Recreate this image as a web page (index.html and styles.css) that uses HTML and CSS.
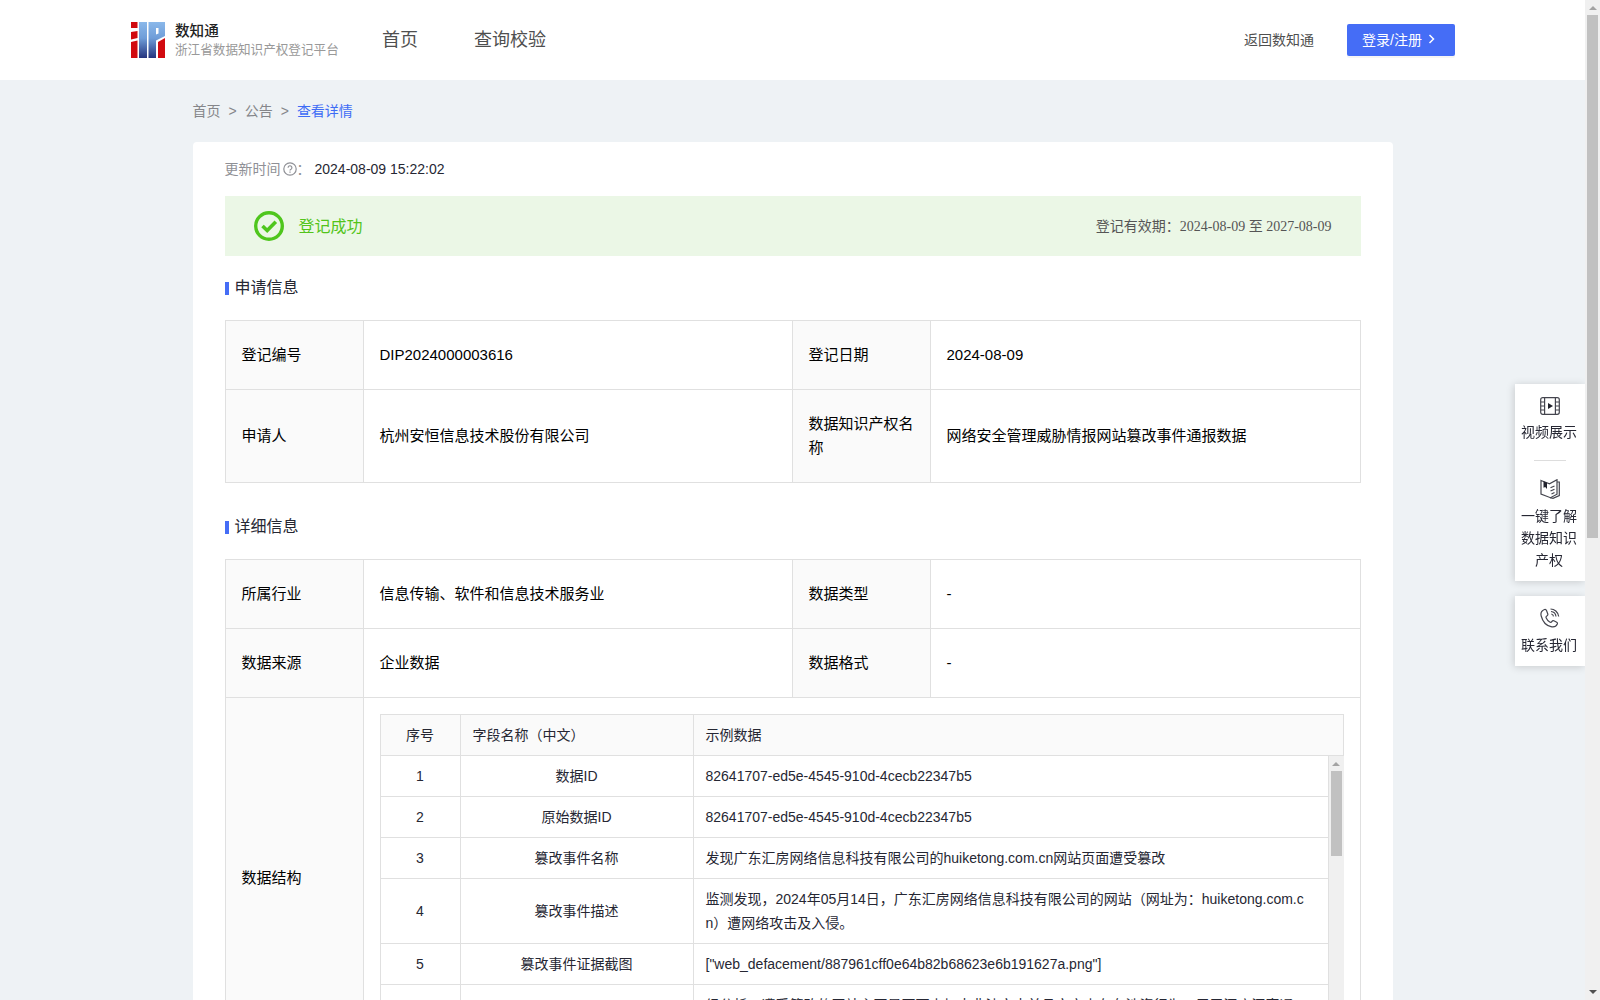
FILE: index.html
```html
<!DOCTYPE html>
<html lang="zh-CN">
<head>
    <meta charset="UTF-8">
    <meta name="viewport" content="width=device-width, initial-scale=1.0">
    <title>浙江省数据知识产权登记平台</title>
    <link rel="stylesheet" href="styles.css">
</head>
<body>
    <div class="window">
        <div class="page">
            <header class="header">
                <div class="logo">
                    <svg width="34" height="36" viewBox="0 0 34 36">
                        <defs>
                            <linearGradient id="blue" x1="0" y1="0" x2="0" y2="1">
                                <stop offset="0" stop-color="#8ab8ea"/>
                                <stop offset="0.45" stop-color="#6f9dd8"/>
                                <stop offset="1" stop-color="#25347e"/>
                            </linearGradient>
                        </defs>
                        <path d="M0 0h6.500v6H0zM0 10l6.500-1v7L0 17.500zM0 20l6.500-1.500V36H0z" fill="#d10a10"/>
                        <path d="M8 0h8v36H8z" fill="url(#blue)"/>
                        <path d="M17.500 0H34v14l-9 4.500V36h-7.500zM25 6v6.500l2.500-1V6z" fill="url(#blue)" fill-rule="evenodd"/>
                        <path d="M27 20l7-4v20h-7z" fill="#d10a10"/>
                    </svg>
                    <div class="logo-text">
                        <div class="logo-name">数知通</div>
                        <div class="logo-sub">浙江省数据知识产权登记平台</div>
                    </div>
                </div>
                <nav class="nav">
                    <a>首页</a>
                    <a>查询校验</a>
                </nav>
                <a class="back">返回数知通</a>
                <button class="login-btn">登录/注册
                    <svg width="8" height="10" viewBox="0 0 8 10"><path d="M1.500 1l4 4-4 4" fill="none" stroke="#fff" stroke-width="1.500"/></svg>
                </button>
            </header>

            <main class="container">
                <div class="breadcrumb">
                    <span>首页</span><i>&gt;</i><span>公告</span><i>&gt;</i><span class="current">查看详情</span>
                </div>

                <div class="card">
                    <div class="update">
                        <span>更新时间</span>
                        <svg width="14" height="14" viewBox="0 0 14 14" fill="none" stroke="#8f9096" stroke-width="1.200"><circle cx="7" cy="7" r="6.200"/><path d="M5.100 5.700a1.900 1.900 0 1 1 2.900 1.600c-.7.400-1 .7-1 1.300M7 9.600v1.200"/></svg>
                        <span class="colon">：</span>
                        <span class="time">2024-08-09 15:22:02</span>
                    </div>

                    <div class="banner">
                        <svg width="30" height="30" viewBox="0 0 30 30" fill="none" stroke="#4fc61d"><circle cx="15" cy="15" r="13.300" stroke-width="3.400"/><path d="M8.500 15l4.700 4.500 8.600-8.700" stroke-width="3.600"/></svg>
                        <span class="banner-status">登记成功</span>
                        <span class="banner-date">登记有效期：2024-08-09 至 2027-08-09</span>
                    </div>

                    <h2>申请信息</h2>
                    <table class="info">
                        <colgroup><col class="label-col"><col class="value-col"><col class="label-col"><col></colgroup>
                        <tr><th>登记编号</th><td>DIP2024000003616</td><th>登记日期</th><td>2024-08-09</td></tr>
                        <tr class="tall"><th>申请人</th><td>杭州安恒信息技术股份有限公司</td><th>数据知识产权名称</th><td>网络安全管理威胁情报网站篡改事件通报数据</td></tr>
                    </table>

                    <h2 class="second">详细信息</h2>
                    <table class="info">
                        <colgroup><col class="label-col"><col class="value-col"><col class="label-col"><col></colgroup>
                        <tr><th>所属行业</th><td>信息传输、软件和信息技术服务业</td><th>数据类型</th><td>-</td></tr>
                        <tr><th>数据来源</th><td>企业数据</td><th>数据格式</th><td>-</td></tr>
                        <tr class="structure">
                            <th>数据结构</th>
                            <td colspan="3">
                                <table class="fields fields-head">
                                    <colgroup><col class="no-col"><col class="name-col"><col></colgroup>
                                    <tr><th class="center">序号</th><th>字段名称（中文）</th><th>示例数据</th></tr>
                                </table>
                                <div class="fields-body">
                                    <table class="fields">
                                        <colgroup><col class="no-col"><col class="name-col"><col></colgroup>
                                        <tr><td>1</td><td>数据ID</td><td>82641707-ed5e-4545-910d-4cecb22347b5</td></tr>
                                        <tr><td>2</td><td>原始数据ID</td><td>82641707-ed5e-4545-910d-4cecb22347b5</td></tr>
                                        <tr><td>3</td><td>篡改事件名称</td><td>发现广东汇房网络信息科技有限公司的huiketong.com.cn网站页面遭受篡改</td></tr>
                                        <tr><td>4</td><td>篡改事件描述</td><td>监测发现，2024年05月14日，广东汇房网络信息科技有限公司的网站（网址为：huiketong.com.cn）遭网络攻击及入侵。</td></tr>
                                        <tr><td>5</td><td>篡改事件证据截图</td><td>["web_defacement/887961cff0e64b82b68623e6b191627a.png"]</td></tr>
                                        <tr class="long"><td></td><td></td><td>经分析，遭受篡改的网站主要是页面中加大非法文本并且文字中存在涉资行为，用于深度深直通，若</td></tr>
                                    </table>
                                    <div class="scrollbar">
                                        <div class="arrow-up"></div>
                                        <div class="thumb"></div>
                                    </div>
                                </div>
                            </td>
                        </tr>
                    </table>
                </div>
            </main>
        </div>

        <div class="scrollbar page-scrollbar">
            <div class="arrow-up"></div>
            <div class="thumb"></div>
            <div class="arrow-down"></div>
        </div>
    </div>

    <aside class="side">
        <div class="side-box">
            <div class="side-item">
                <svg width="20" height="18" viewBox="0 0 20 18" fill="none" stroke="#44454e" stroke-width="1.200"><rect x=".7" y=".7" width="18.600" height="16.600" rx="2"/><path d="M4.600 1v16M15.400 1v16M1 5h3.600M1 9h3.600M1 13h3.600M15.400 5H19M15.400 9H19M15.400 13H19"/><path d="M8 6l5 3-5 3z" fill="#22232d" stroke="none"/></svg>
                <span>视频展示</span>
            </div>
            <div class="side-line"></div>
            <div class="side-item">
                <svg width="20" height="20" viewBox="0 0 20 20" fill="none" stroke="#44454e" stroke-width="1.200"><path d="M1 1.500l8.500 3.300L17 .7v14.500l-6.500 3.500L1 15z"/><path d="M17 3h2.300v13.500L13 19.300l-3-.6M10.500 8.800l4-1.800M10.500 12l4-1.800M11.500 15l3-1.500"/><path d="M3.500 2.300l3.500 1.400V10L5.200 8 3.500 8.700z" fill="#22232d" stroke="none"/></svg>
                <span>一键了解数据知识产权</span>
            </div>
        </div>
        <div class="side-box">
            <div class="side-item">
                <svg width="20" height="20" viewBox="0 0 20 20" fill="none" stroke="#44454e" stroke-width="1.200"><path d="M4.500 1.500C2 2.500.4 5 1.200 8c1.300 5 5 9.500 9.800 10.700 2.500.6 5.200-.3 6.300-2.700.4-1-.2-1.600-1-2l-2.500-1.200c-1-.4-1.500.1-2 .8-.6.900-1.300.9-2.100.4C8 13 6.900 11.500 6.200 10c-.4-.9-.2-1.500.6-2 .8-.6 1.300-1.100 1-2L6.600 2.700c-.4-1-1-1.600-2.100-1.200z"/><path d="M10.500 1c4 0 7.500 3 8.200 7.500M11 3.500c2.500.2 4.700 2.200 5 5M11.300 6c1.200.2 2 1.100 2.200 2.300"/></svg>
                <span>联系我们</span>
            </div>
        </div>
    </aside>
</body>
</html>
```

FILE: styles.css
```css
body {
    margin: 0;
    font-family: "Liberation Sans", "Noto Sans CJK SC", sans-serif;
    font-size: 14px;
    color: #262733;
    background-color: #eef2f5;
    overflow: hidden;
}
.window {
    display: flex;
    height: 1000px;
    overflow: hidden;
}
.page {
    flex: 1;
}
.header {
    display: flex;
    align-items: center;
    box-sizing: border-box;
    height: 80px;
    padding: 0 130px 2px 131px;
    background-color: #fff;
    color: #4f4f4f;
}
.logo {
    display: flex;
    align-items: center;
    gap: 10px;
    width: 251px;
    padding-top: 2px;
}
.logo-name {
    font-size: 14.6px;
    line-height: 20px;
    font-weight: 500;
    color: #222;
}
.logo-sub {
    font-size: 12.6px;
    line-height: 19px;
    color: #999;
    white-space: nowrap;
}
.nav {
    display: flex;
    flex: 1;
    gap: 56px;
    padding-bottom: 2px;
    font-size: 18px;
}
.back {
    margin-right: 33px;
    padding-bottom: 1px;
}
.login-btn {
    display: flex;
    align-items: center;
    gap: 6px;
    width: 108px;
    height: 32px;
    margin-top: 2px;
    padding: 0 0 3px 15px;
    border: none;
    border-radius: 2px;
    background-color: #456df6;
    box-shadow: 0 2px 0 rgba(0, 0, 0, 0.04);
    color: #fff;
    font-family: inherit;
    font-size: 14px;
    white-space: nowrap;
}
.container {
    width: 1200px;
    margin: 0 auto;
}
.breadcrumb {
    display: flex;
    height: 62px;
    line-height: 62px;
    color: #85868a;
}
.breadcrumb i {
    font-style: normal;
    margin: 0 8px;
}
.breadcrumb .current {
    color: #3e6cf5;
}
.card {
    box-sizing: border-box;
    height: 1100px;
    padding: 16px 32px;
    border-radius: 4px;
    background-color: #fff;
}
.update {
    display: flex;
    align-items: center;
    height: 22px;
    line-height: 20px;
    color: #8f9096;
}
.update svg {
    margin: 0 0 0 2px;
}
.update .time {
    margin-left: 4px;
    color: #262733;
}
.update .colon {
    width: 14px;
}
.banner {
    display: flex;
    align-items: center;
    height: 60px;
    margin-top: 16px;
    padding: 0 29px;
    background-color: #ebf7e6;
}
.banner-status {
    flex: 1;
    margin-left: 15px;
    padding-bottom: 3px;
    font-size: 16px;
    color: #52c41a;
}
.banner-date {
    padding-bottom: 3px;
    font-family: "Liberation Serif", "Noto Sans CJK SC", serif;
    color: #555;
}
h2 {
    display: flex;
    align-items: center;
    gap: 6px;
    height: 24px;
    margin: 18px 0 22px;
    font-size: 16px;
    font-weight: normal;
}
h2::before {
    content: "";
    width: 4px;
    height: 13px;
    margin-top: 5px;
    background-color: #456df6;
}
h2.second {
    margin: 30px 0 22px;
}
table {
    width: 100%;
    table-layout: fixed;
    border-collapse: separate;
    border-spacing: 0;
    border: 0 solid #e0e0e0;
    border-width: 1px 0 0 1px;
}
th,
td {
    box-sizing: border-box;
    border: 0 solid #e0e0e0;
    border-width: 0 1px 1px 0;
    text-align: left;
    font-weight: normal;
}
th {
    background-color: #fafafa;
}
.label-col {
    width: 138px;
}
.value-col {
    width: 429px;
}
.info {
    font-size: 15px;
    line-height: 24px;
    color: #000;
}
.info > tbody > tr > th,
.info > tbody > tr > td {
    height: 69px;
    padding: 0 16px;
}
.info > tbody > .tall > th,
.info > tbody > .tall > td {
    height: 93px;
}
.info > tbody > .structure > th,
.info > tbody > .structure > td {
    height: 361px;
}
.fields {
    font-size: 14px;
    color: #262733;
}
.fields th,
.fields td {
    padding: 8px 11px 8px 12px;
    word-break: break-all;
}
.fields .center,
.fields td:nth-child(1),
.fields td:nth-child(2) {
    padding: 8px 12px;
    text-align: center;
}
.no-col {
    width: 80px;
}
.name-col {
    width: 233px;
}
.fields-body {
    display: flex;
    height: 286px;
    overflow: hidden;
}
.fields-body .fields {
    width: 949px;
    border-top: none;
}
.scrollbar {
    display: flex;
    flex-direction: column;
    align-items: center;
    width: 15px;
    background-color: #f0f0f0;
}
.arrow-up {
    margin: 6px 0 5px;
    border: 4px solid transparent;
    border-top: none;
    border-bottom-color: #a3a3a3;
}
.thumb {
    width: 11px;
    height: 85px;
    background-color: #c1c1c1;
}
.page-scrollbar .thumb {
    height: 523px;
}
.arrow-down {
    margin: auto 0 6px;
    border: 4px solid transparent;
    border-bottom: none;
    border-top-color: #505050;
}
.side {
    position: fixed;
    top: 384px;
    right: 15px;
    width: 70px;
}
.side-box {
    box-sizing: border-box;
    margin-bottom: 15px;
    padding: 13px 8px 10px 6px;
    background-color: #fff;
    box-shadow: -1px 1px 8px rgba(0, 0, 0, 0.16);
    clip-path: inset(-12px 0 -12px -12px);
}
.side-box:last-child {
    padding-top: 12px;
}
.side-item {
    display: flex;
    flex-direction: column;
    align-items: center;
    gap: 6px;
    line-height: 22px;
    text-align: center;
}
.side-item svg {
    margin-left: 1px;
}
.side-line {
    width: 32px;
    height: 1px;
    margin: 17px auto 18px 19px;
    margin-left: 13px;
    background-color: #ddd;
}
```
